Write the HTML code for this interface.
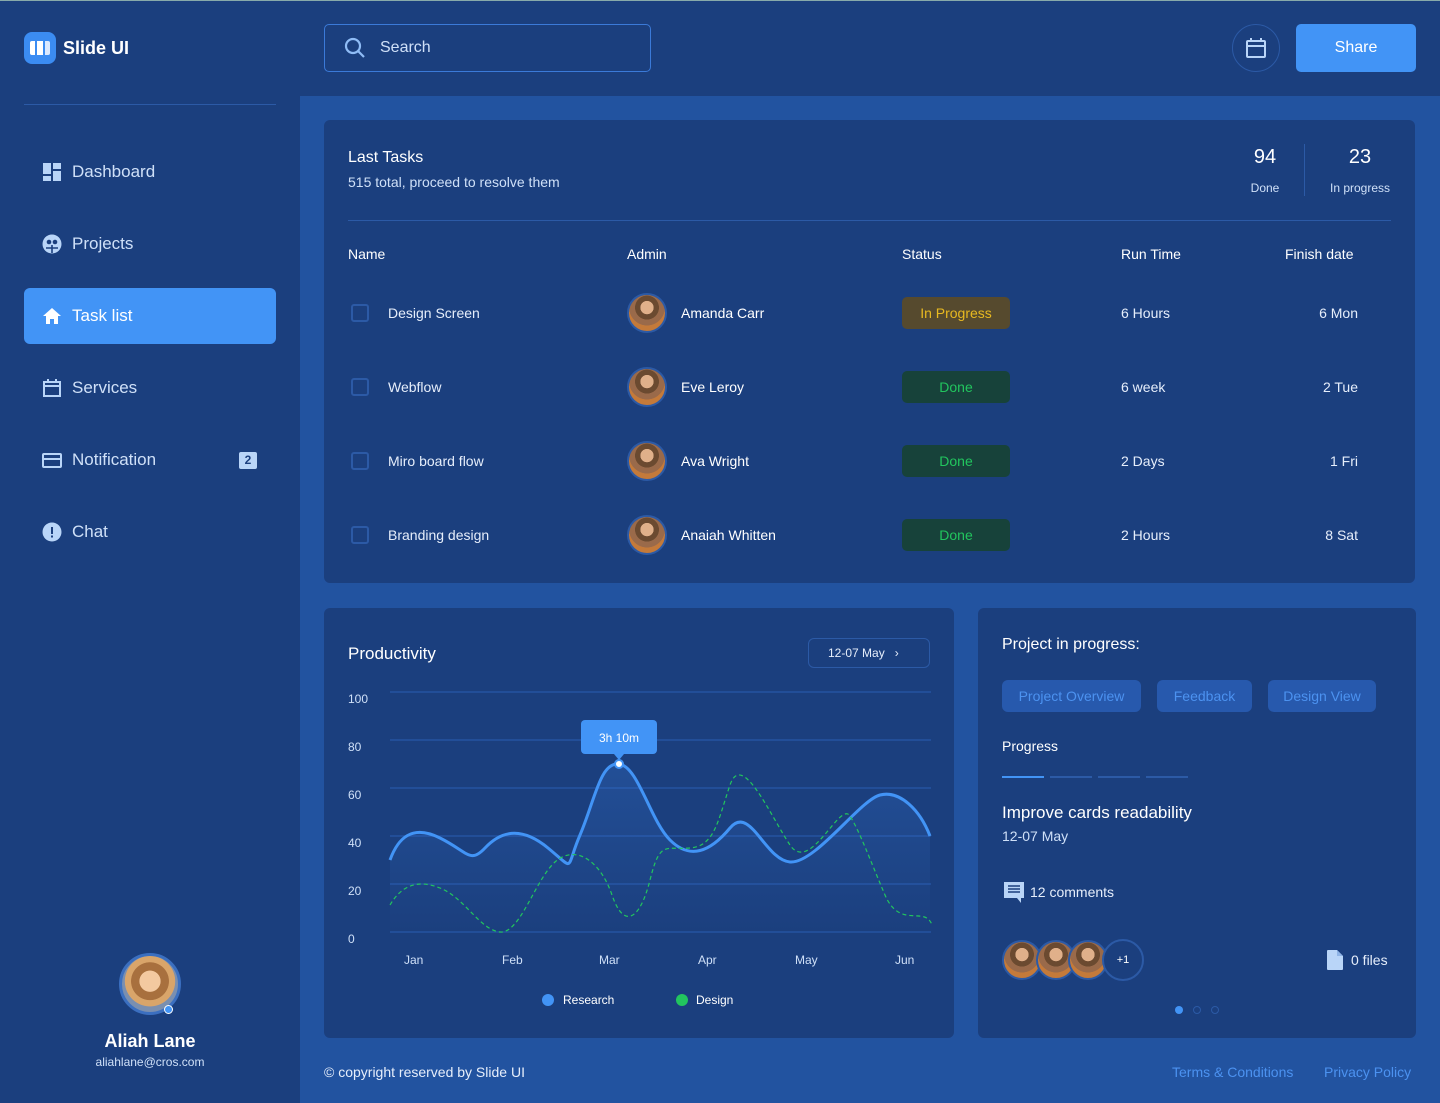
<!DOCTYPE html>
<html><head><meta charset="utf-8"><style>
*{box-sizing:border-box;margin:0;padding:0}
body{width:1440px;height:1103px;background:#1b3f7e;font-family:"Liberation Sans",sans-serif;color:#fff;position:relative;overflow:hidden}
.a{position:absolute}
.main{left:300px;top:96px;width:1140px;height:1007px;background:#2253a0}
.card{background:#1b3f7e;border-radius:6px}
.nav{left:24px;width:252px;height:56px;border-radius:6px;display:flex;align-items:center;padding-left:18px;font-size:17px;color:#cfe0f8}
.nav svg{margin-right:10px}
.th{font-size:14px;color:#fff;top:246px}
.td{font-size:14px;color:#e6eefb}
.cb{width:18px;height:18px;border:2px solid #2c5aa6;border-radius:3px;left:351px}
.av{width:40px;height:40px;border-radius:50%;border:2px solid #2c5aa6;background:radial-gradient(circle at 50% 35%,#e0b08a 0 22%,#6b4a30 23% 40%,#9a6a4a 41% 60%,#c47a3a 61%)}
.st{width:108px;height:32px;border-radius:5px;left:902px;font-size:14px;display:flex;align-items:center;justify-content:center}
.tab{height:32px;border-radius:6px;background:#2759ad;color:#4c92f0;font-size:14px;display:flex;align-items:center;justify-content:center}
.yl{left:348px;font-size:12px;color:#cfe0f8}
.xl{font-size:12px;color:#cfe0f8;top:953px}
</style></head><body>
<div class="a" style="left:0;top:0;width:1440px;height:1px;background:#8aa"></div>
<!-- logo -->
<div class="a" style="left:24px;top:32px;width:32px;height:32px;border-radius:8px;background:#3b8cf2"><div class="a" style="left:6px;top:9px;width:20px;height:14px;display:flex;gap:2px"><i style="flex:1;background:#fff;border-radius:2px 0 0 2px"></i><i style="flex:1;background:#fff"></i><i style="flex:1;background:#dbe9ff;border-radius:0 2px 2px 0"></i></div></div>
<div class="a" style="left:63px;top:38px;font-size:18px;font-weight:bold">Slide UI</div>
<div class="a" style="left:24px;top:104px;width:252px;height:1px;background:#2c5aa6"></div>
<div class="a nav" style="top:144px"><svg width="20" height="20" viewBox="0 0 20 20" fill="#b9d5f8"><rect x="1" y="1" width="8" height="11"/><rect x="11" y="1" width="8" height="6"/><rect x="1" y="14" width="8" height="5"/><rect x="11" y="9" width="8" height="10"/></svg>Dashboard</div>
<div class="a nav" style="top:216px"><svg width="20" height="20" viewBox="0 0 20 20"><circle cx="10" cy="10" r="9.5" fill="#b9d5f8"/><circle cx="7" cy="8" r="2.3" fill="#1b3f7e"/><circle cx="13" cy="8" r="2.3" fill="#1b3f7e"/><path d="M4 14h12M10 11v8" stroke="#1b3f7e" stroke-width="1.6"/></svg>Projects</div>
<div class="a nav" style="top:288px;background:#4294f6;color:#fff"><svg width="20" height="20" viewBox="0 0 20 20" fill="#fff"><path d="M10 2L1 10h3v8h4v-5h4v5h4v-8h3z"/></svg>Task list</div>
<div class="a nav" style="top:360px"><svg width="20" height="20" viewBox="0 0 20 20" fill="none" stroke="#b9d5f8" stroke-width="2"><rect x="2" y="4" width="16" height="14"/><path d="M2 8h16M6 1v4M14 1v4"/></svg>Services</div>
<div class="a nav" style="top:432px"><svg width="20" height="20" viewBox="0 0 20 20" fill="none" stroke="#b9d5f8" stroke-width="2"><rect x="1" y="4" width="18" height="13" rx="1"/><path d="M1 9h18"/></svg>Notification<span class="a" style="left:215px;top:20px;width:18px;height:17px;background:#b9d5f8;color:#1b3f7e;font-size:12px;font-weight:bold;text-align:center;line-height:17px;border-radius:2px">2</span></div>
<div class="a nav" style="top:504px"><svg width="20" height="20" viewBox="0 0 20 20"><circle cx="10" cy="10" r="9.5" fill="#b9d5f8"/><rect x="9" y="5" width="2" height="7" fill="#1b3f7e"/><rect x="9" y="13.5" width="2" height="2" fill="#1b3f7e"/></svg>Chat</div>
<!-- user -->
<div class="a" style="left:119px;top:953px;width:62px;height:62px;border-radius:50%;border:3px solid #3b6fc0;background:radial-gradient(circle at 50% 45%,#f3c9a0 0 25%,#a8703e 26% 45%,#d9a56a 46% 60%,#7a8fb0 61%)"></div>
<div class="a" style="left:164px;top:1005px;width:9px;height:9px;border-radius:50%;background:#4294f6;border:1px solid #fff"></div>
<div class="a" style="left:0;width:300px;top:1031px;text-align:center;font-size:18px;font-weight:bold">Aliah Lane</div>
<div class="a" style="left:0;width:300px;top:1055px;text-align:center;font-size:12px;color:#cfe0f8">aliahlane@cros.com</div>
<!-- top bar -->
<div class="a" style="left:324px;top:24px;width:327px;height:48px;border:1px solid #3b7ad8;border-radius:5px"></div>
<svg class="a" style="left:344px;top:37px" width="22" height="22" viewBox="0 0 22 22" fill="none" stroke="#8fbcf6" stroke-width="2.2"><circle cx="9" cy="9" r="7"/><path d="M14 14l6 6"/></svg>
<div class="a" style="left:380px;top:39px;font-size:16px;color:#cfe0f8">Search</div>
<div class="a" style="left:1232px;top:24px;width:48px;height:48px;border-radius:50%;border:1px solid #2c5aa6"></div>
<svg class="a" style="left:1245px;top:37px" width="22" height="22" viewBox="0 0 22 22" fill="none" stroke="#b9d5f8" stroke-width="2"><rect x="2" y="4" width="18" height="16" rx="1"/><path d="M2 9h18M6 1v4M16 1v4"/></svg>
<div class="a" style="left:1296px;top:24px;width:120px;height:48px;border-radius:5px;background:#4294f6;font-size:16px;text-align:center;line-height:48px">Share</div>
<div class="a main"></div>
<!-- Tasks card -->
<div class="a card" style="left:324px;top:120px;width:1091px;height:463px"></div>
<div class="a" style="left:348px;top:149px;font-size:16px">Last Tasks</div>
<div class="a" style="left:348px;top:174px;font-size:14px;color:#cfe0f8">515 total, proceed to resolve them</div>
<div class="a" style="left:1240px;top:146px;width:50px;text-align:center;font-size:20px">94</div>
<div class="a" style="left:1240px;top:181px;width:50px;text-align:center;font-size:12px;color:#cfe0f8">Done</div>
<div class="a" style="left:1304px;top:144px;width:1px;height:52px;background:#2c5aa6"></div>
<div class="a" style="left:1320px;top:146px;width:80px;text-align:center;font-size:20px">23</div>
<div class="a" style="left:1320px;top:181px;width:80px;text-align:center;font-size:12px;color:#cfe0f8">In progress</div>
<div class="a" style="left:348px;top:220px;width:1043px;height:1px;background:#2c5aa6"></div>
<div class="a th" style="left:348px">Name</div><div class="a th" style="left:627px">Admin</div><div class="a th" style="left:902px">Status</div><div class="a th" style="left:1121px">Run Time</div><div class="a th" style="left:1285px">Finish date</div>

<div class="a cb" style="top:304px"></div><div class="a td" style="left:388px;top:305px">Design Screen</div><div class="a av" style="left:627px;top:293px"></div><div class="a td" style="left:681px;top:305px;color:#fff">Amanda Carr</div><div class="a st" style="top:297px;background:#564a2e;color:#e8b920">In Progress</div><div class="a td" style="left:1121px;top:305px">6 Hours</div><div class="a td" style="left:1258px;width:100px;text-align:right;top:305px">6 Mon</div>
<div class="a cb" style="top:378px"></div><div class="a td" style="left:388px;top:379px">Webflow</div><div class="a av" style="left:627px;top:367px"></div><div class="a td" style="left:681px;top:379px;color:#fff">Eve Leroy</div><div class="a st" style="top:371px;background:#17423a;color:#22c55e">Done</div><div class="a td" style="left:1121px;top:379px">6 week</div><div class="a td" style="left:1258px;width:100px;text-align:right;top:379px">2 Tue</div>
<div class="a cb" style="top:452px"></div><div class="a td" style="left:388px;top:453px">Miro board flow</div><div class="a av" style="left:627px;top:441px"></div><div class="a td" style="left:681px;top:453px;color:#fff">Ava Wright</div><div class="a st" style="top:445px;background:#17423a;color:#22c55e">Done</div><div class="a td" style="left:1121px;top:453px">2 Days</div><div class="a td" style="left:1258px;width:100px;text-align:right;top:453px">1 Fri</div>
<div class="a cb" style="top:526px"></div><div class="a td" style="left:388px;top:527px">Branding design</div><div class="a av" style="left:627px;top:515px"></div><div class="a td" style="left:681px;top:527px;color:#fff">Anaiah Whitten</div><div class="a st" style="top:519px;background:#17423a;color:#22c55e">Done</div><div class="a td" style="left:1121px;top:527px">2 Hours</div><div class="a td" style="left:1258px;width:100px;text-align:right;top:527px">8 Sat</div>
<!-- Productivity -->
<div class="a card" style="left:324px;top:608px;width:630px;height:430px"></div>
<div class="a" style="left:348px;top:644px;font-size:17px">Productivity</div>
<div class="a" style="left:808px;top:638px;width:122px;height:30px;border:1px solid #2c5aa6;border-radius:6px;font-size:12px;color:#e6eefb;line-height:28px;padding-left:19px">12-07 May &nbsp;&nbsp;›</div>
<svg class="a" style="left:0;top:0" width="1440" height="1103">
<defs><linearGradient id="g" x1="0" y1="0" x2="0" y2="1"><stop offset="0" stop-color="#3a7ee0" stop-opacity=".25"/><stop offset="1" stop-color="#3a7ee0" stop-opacity="0"/></linearGradient></defs>
<g stroke="#2553a0" stroke-width="1.5"><path d="M390 692H931M390 740H931M390 788H931M390 836H931M390 884H931M390 932H931"/></g>
<path d="M390 860C398 838 412 824 440 838S470 864 485 848 520 825 548 848 565 870 580 835 600 762 619 764 650 820 670 840 710 852 730 828 765 860 790 862 860 800 880 795 920 810 930 836V932H390Z" fill="url(#g)"/>
<path d="M390 860C398 838 412 824 440 838S470 864 485 848 520 825 548 848 565 870 580 835 600 762 619 764 650 820 670 840 710 852 730 828 765 860 790 862 860 800 880 795 920 810 930 836" fill="none" stroke="#4294f6" stroke-width="3"/>
<path d="M390 905C400 888 415 878 440 888S480 930 500 932 535 880 555 862 600 860 612 895 640 920 650 880 665 850 690 848 718 820 730 785 770 815 790 845 840 800 850 816 870 860 885 895 925 905 932 925" fill="none" stroke="#22c55e" stroke-width="1.2" stroke-dasharray="4 3"/>
<circle cx="619" cy="764" r="4" fill="#fff" stroke="#4294f6" stroke-width="2"/>
<rect x="581" y="720" width="76" height="34" rx="4" fill="#4294f6"/><path d="M614 754l5 6 5-6z" fill="#4294f6"/>
<text x="619" y="742" fill="#fff" font-size="12" text-anchor="middle" font-family="Liberation Sans">3h 10m</text>
</svg>
<div class="a yl" style="top:692px">100</div><div class="a yl" style="top:740px">80</div><div class="a yl" style="top:788px">60</div><div class="a yl" style="top:836px">40</div><div class="a yl" style="top:884px">20</div><div class="a yl" style="top:932px">0</div>
<div class="a xl" style="left:404px">Jan</div><div class="a xl" style="left:502px">Feb</div><div class="a xl" style="left:599px">Mar</div><div class="a xl" style="left:698px">Apr</div><div class="a xl" style="left:795px">May</div><div class="a xl" style="left:895px">Jun</div>
<div class="a" style="left:542px;top:994px;width:12px;height:12px;border-radius:50%;background:#4294f6"></div><div class="a" style="left:563px;top:993px;font-size:12px">Research</div>
<div class="a" style="left:676px;top:994px;width:12px;height:12px;border-radius:50%;background:#22c55e"></div><div class="a" style="left:696px;top:993px;font-size:12px">Design</div>
<!-- Project card -->
<div class="a card" style="left:978px;top:608px;width:438px;height:430px"></div>
<div class="a" style="left:1002px;top:636px;font-size:16px">Project in progress:</div>
<div class="a tab" style="left:1002px;top:680px;width:139px">Project Overview</div>
<div class="a tab" style="left:1157px;top:680px;width:95px">Feedback</div>
<div class="a tab" style="left:1268px;top:680px;width:108px">Design View</div>
<div class="a" style="left:1002px;top:738px;font-size:14px">Progress</div>
<div class="a" style="left:1002px;top:776px;width:42px;height:2px;background:#4294f6"></div>
<div class="a" style="left:1050px;top:776px;width:42px;height:2px;background:#2c5aa6"></div>
<div class="a" style="left:1098px;top:776px;width:42px;height:2px;background:#2c5aa6"></div>
<div class="a" style="left:1146px;top:776px;width:42px;height:2px;background:#2c5aa6"></div>
<div class="a" style="left:1002px;top:803px;font-size:17px">Improve cards readability</div>
<div class="a" style="left:1002px;top:828px;font-size:14px;color:#cfe0f8">12-07 May</div>
<svg class="a" style="left:1004px;top:882px" width="21" height="21" viewBox="0 0 21 21"><path d="M0 0h20v16h-3v5l-4-5H0z" fill="#b9d5f8"/><path d="M4 4h12M4 7h12M4 10h12" stroke="#1b3f7e" stroke-width="1.5"/></svg>
<div class="a" style="left:1030px;top:884px;font-size:14px;color:#e6eefb">12 comments</div>
<div class="a av" style="left:1002px;top:940px"></div><div class="a av" style="left:1036px;top:940px"></div><div class="a av" style="left:1068px;top:940px"></div>
<div class="a" style="left:1102px;top:939px;width:42px;height:42px;border-radius:50%;border:2px solid #2c5aa6;background:#1b3f7e;font-size:11px;text-align:center;line-height:38px">+1</div>
<svg class="a" style="left:1327px;top:950px" width="16" height="20" viewBox="0 0 16 20"><path d="M0 1q0-1 1-1h9l6 6v13q0 1-1 1H1q-1 0-1-1z" fill="#b9d5f8"/><path d="M10 0v6h6" fill="#8fb4e6"/></svg>
<div class="a" style="left:1351px;top:952px;font-size:14px;color:#e6eefb">0 files</div>
<div class="a" style="left:1175px;top:1006px;width:8px;height:8px;border-radius:50%;background:#4294f6"></div>
<div class="a" style="left:1193px;top:1006px;width:8px;height:8px;border-radius:50%;border:1px solid #2c5aa6"></div>
<div class="a" style="left:1211px;top:1006px;width:8px;height:8px;border-radius:50%;border:1px solid #2c5aa6"></div>
<!-- footer -->
<div class="a" style="left:324px;top:1064px;font-size:14px;color:#e6eefb">© copyright reserved by Slide UI</div>
<div class="a" style="left:1172px;top:1064px;font-size:14px;color:#4c92f0">Terms &amp; Conditions</div>
<div class="a" style="left:1324px;top:1064px;font-size:14px;color:#4c92f0">Privacy Policy</div>
</body></html>
